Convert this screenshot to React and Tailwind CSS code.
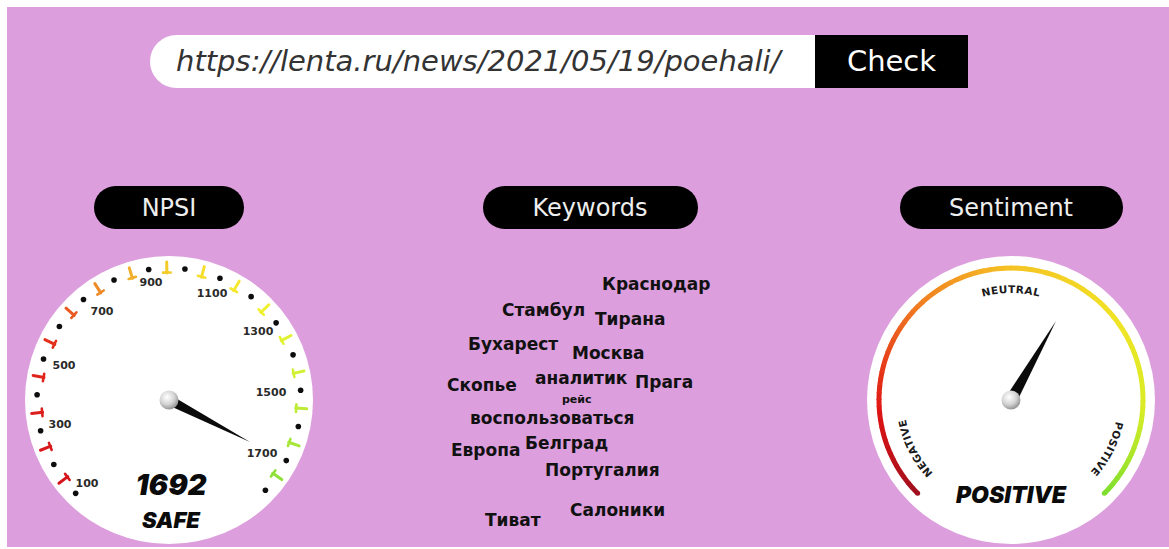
import React from 'react';

const CX = 145;
const CY = 145;

// point on a circle around the gauge centre, angle in degrees (0 = east, counter-clockwise)
const pt = (r, deg) => {
  const a = (deg * Math.PI) / 180;
  return [CX + r * Math.cos(a), CY - r * Math.sin(a)];
};

const hex = (h) => [1, 3, 5].map((i) => parseInt(h.slice(i, i + 2), 16));
const mix = (a, b, t) => {
  const ca = hex(a);
  const cb = hex(b);
  return `rgb(${ca.map((v, i) => Math.round(v + (cb[i] - v) * t)).join(',')})`;
};

const colorAt = (stops, t) => {
  for (let i = 1; i < stops.length; i++) {
    if (t <= stops[i][0]) {
      const [t0, c0] = stops[i - 1];
      const [t1, c1] = stops[i];
      return mix(c0, c1, (t - t0) / (t1 - t0));
    }
  }
  return stops[stops.length - 1][1];
};

const TICK_COLORS = [
  '#d4161c', '#d81a1c', '#dc1f1c', '#e0261c', '#e2301c', '#ea5a20', '#ef8a28', '#f1ae2a',
  '#f3cc2a', '#f5df2c', '#f4e92e', '#eef030', '#e2f232', '#d2f034', '#bdeb36', '#a6e638', '#8fe03a',
];

const NPSI_LABELS = [
  ['100', 63, 229],
  ['300', 36, 170],
  ['500', 40, 111],
  ['700', 78, 57],
  ['900', 127, 28],
  ['1100', 188, 39],
  ['1300', 234, 77],
  ['1500', 247, 138],
  ['1700', 238, 199],
];

function Needle({ tip, half, id }) {
  const [tx, ty] = tip;
  const dx = tx - CX;
  const dy = ty - CY;
  const len = Math.hypot(dx, dy);
  const nx = (-dy / len) * half;
  const ny = (dx / len) * half;
  return (
    <g>
      <polygon
        points={`${CX + nx},${CY + ny} ${tx},${ty} ${CX - nx},${CY - ny}`}
        fill="#0b0b0b"
      />
      <circle cx={CX} cy={CY} r="9.5" fill={`url(#${id})`} />
    </g>
  );
}

function KnobGradient({ id }) {
  return (
    <radialGradient id={id} cx="40%" cy="35%" r="70%">
      <stop offset="0%" stopColor="#ffffff" />
      <stop offset="55%" stopColor="#d4d4d4" />
      <stop offset="100%" stopColor="#8a8a8a" />
    </radialGradient>
  );
}

function NpsiGauge() {
  const step = 15.77;
  const dots = Array.from({ length: 18 }, (_, k) => pt(132, 225 - k * step));
  const ticks = TICK_COLORS.map((c, k) => {
    const ang = 225 - (k + 0.5) * step;
    const [x1, y1] = pt(127, ang);
    const [x2, y2] = pt(138, ang);
    const [b1x, b1y] = pt(127.5, ang + 1.7);
    const [b2x, b2y] = pt(127.5, ang - 1.7);
    return { c, x1, y1, x2, y2, b1x, b1y, b2x, b2y };
  });

  return (
    <svg width="290" height="290" viewBox="0 0 290 290">
      <defs>
        <KnobGradient id="knobL" />
      </defs>
      <circle cx={CX} cy={CY} r="144" fill="#ffffff" />
      {dots.map(([x, y], i) => (
        <circle key={i} cx={x} cy={y} r="2.8" fill="#0d0d0d" />
      ))}
      {ticks.map((t, i) => (
        <g key={i} stroke={t.c} strokeLinecap="round">
          <line x1={t.x1} y1={t.y1} x2={t.x2} y2={t.y2} strokeWidth="3" />
          <line x1={t.b1x} y1={t.b1y} x2={t.b2x} y2={t.b2y} strokeWidth="2.6" />
        </g>
      ))}
      {NPSI_LABELS.map(([txt, x, y]) => (
        <text
          key={txt}
          x={x}
          y={y}
          textAnchor="middle"
          dominantBaseline="middle"
          fontSize="11"
          fontWeight="600"
          fill="#2a2a2a"
          fontFamily="'DejaVu Sans', sans-serif"
        >
          {txt}
        </text>
      ))}
      <Needle tip={[226, 187]} half={5} id="knobL" />
      <text
        x="147"
        y="240"
        textAnchor="middle"
        fontSize="29"
        fontWeight="900"
        fontStyle="italic"
        fill="#0b0b0b"
        fontFamily="Inter, sans-serif"
      >
        1692
      </text>
      <text
        x="147"
        y="273"
        textAnchor="middle"
        fontSize="22"
        fontWeight="900"
        fontStyle="italic"
        fill="#0b0b0b"
        fontFamily="Inter, sans-serif"
      >
        SAFE
      </text>
    </svg>
  );
}

const ARC_STOPS = [
  [0, '#a0101e'],
  [0.15, '#e01414'],
  [0.33, '#f07a22'],
  [0.5, '#f5c324'],
  [0.7, '#f0e426'],
  [0.85, '#d8ec26'],
  [1, '#7ede2e'],
];

function SentimentGauge() {
  const n = 90;
  const segs = Array.from({ length: n }, (_, i) => {
    const a0 = 225 - (270 * i) / n;
    const a1 = 225 - (270 * (i + 1)) / n - 0.4;
    const [x0, y0] = pt(132, a0);
    const [x1, y1] = pt(132, Math.max(a1, -45));
    return { d: `M${x0},${y0} A132 132 0 0 1 ${x1},${y1}`, c: colorAt(ARC_STOPS, (i + 0.5) / n) };
  });
  const [sx, sy] = pt(107, 225);
  const [ex, ey] = pt(107, -45);
  const [l0x, l0y] = pt(132, 225);
  const [l1x, l1y] = pt(132, -45);

  return (
    <svg width="290" height="290" viewBox="0 0 290 290">
      <defs>
        <KnobGradient id="knobR" />
        <path id="sentPath" d={`M${sx},${sy} A107 107 0 1 1 ${ex},${ey}`} fill="none" />
      </defs>
      <circle cx={CX} cy={CY} r="144" fill="#ffffff" />
      {segs.map((s, i) => (
        <path key={i} d={s.d} stroke={s.c} strokeWidth="5" fill="none" />
      ))}
      <circle cx={l0x} cy={l0y} r="2.5" fill={ARC_STOPS[0][1]} />
      <circle cx={l1x} cy={l1y} r="2.5" fill={ARC_STOPS[ARC_STOPS.length - 1][1]} />
      <g fontSize="10.5" fontWeight="600" fill="#1a1a1a" fontFamily="'DejaVu Sans', sans-serif" letterSpacing="0.4">
        <text textAnchor="middle">
          <textPath href="#sentPath" startOffset="6.8%">NEGATIVE</textPath>
        </text>
        <text textAnchor="middle">
          <textPath href="#sentPath" startOffset="50%">NEUTRAL</textPath>
        </text>
        <text textAnchor="middle">
          <textPath href="#sentPath" startOffset="93.3%">POSITIVE</textPath>
        </text>
      </g>
      <Needle tip={[190, 66]} half={6} id="knobR" />
      <text
        x="145"
        y="248"
        textAnchor="middle"
        fontSize="23"
        fontWeight="900"
        fontStyle="italic"
        fill="#0b0b0b"
        fontFamily="Inter, sans-serif"
      >
        POSITIVE
      </text>
    </svg>
  );
}

const WORDS = [
  ['Краснодар', 162, 14],
  ['Стамбул', 62, 40],
  ['Тирана', 155, 49],
  ['Бухарест', 28, 74],
  ['Москва', 132, 83],
  ['Скопье', 7, 115],
  ['аналитик', 95, 108],
  ['Прага', 195, 112],
  ['воспользоваться', 30, 148],
  ['Европа', 11, 180],
  ['Белград', 85, 173],
  ['Португалия', 105, 200],
  ['Тиват', 45, 250],
  ['Салоники', 130, 240],
];

function Pill({ children, w }) {
  return (
    <div className={`flex h-[43px] items-center justify-center rounded-full bg-black text-[24px] text-[#eeeeee] ${w}`}>
      {children}
    </div>
  );
}

export default function App() {
  return (
    <div className="bg-white pl-[7px] pt-[7px] font-['DejaVu_Sans',sans-serif]">
      <div className="h-[540px] overflow-hidden bg-[#dc9edc]">
        {/* url form */}
        <div className="flex pl-[143px] pt-[28px]">
          <div className="flex h-[53px] w-[665px] items-center rounded-l-full bg-white pl-[26px] text-[29px] font-light italic text-[#333333]">
            https://lenta.ru/news/2021/05/19/poehali/
          </div>
          <button className="h-[53px] w-[153px] bg-black text-[29px] text-white">Check</button>
        </div>

        {/* results */}
        <div className="mt-[98px] flex gap-[126px] pl-[17px]">
          <div className="flex w-[290px] flex-col items-center">
            <Pill w="w-[150px]">NPSI</Pill>
            <div className="mt-[26px]">
              <NpsiGauge />
            </div>
          </div>

          <div className="flex w-[300px] flex-col items-center">
            <Pill w="w-[215px]">Keywords</Pill>
            <div className="relative mt-[31px] h-[280px] w-[300px] text-[17px] font-bold text-[#111111]">
              {WORDS.map(([w, x, y]) => (
                <span key={w} className="absolute leading-[20px] whitespace-nowrap" style={{ left: x, top: y }}>
                  {w}
                </span>
              ))}
              <span className="absolute left-[122px] top-[130px] text-[11px] leading-[20px]">рейс</span>
            </div>
          </div>

          <div className="flex w-[290px] flex-col items-center">
            <Pill w="w-[223px]">Sentiment</Pill>
            <div className="mt-[26px]">
              <SentimentGauge />
            </div>
          </div>
        </div>
      </div>
    </div>
  );
}
